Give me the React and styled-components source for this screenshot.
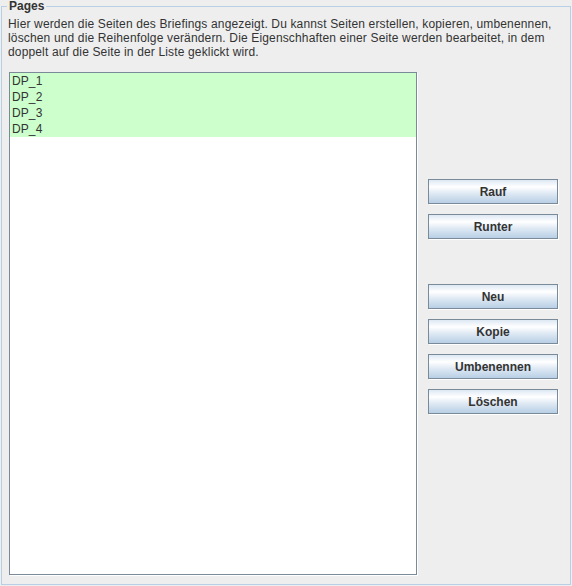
import styled, { createGlobalStyle } from "styled-components";

const GlobalStyle = createGlobalStyle`
  html, body {
    margin: 0;
    padding: 0;
    background: #eeeeee;
  }
  body {
    font-family: "Liberation Sans", Arial, sans-serif;
    font-size: 12px;
    color: #333333;
  }
`;

const Page = styled.div`
  width: 572px;
  height: 586px;
  padding: 0 1px 1px 1px;
  box-sizing: border-box;
  background: #eeeeee;
`;

const Frame = styled.fieldset`
  margin: 0;
  height: 585px;
  box-sizing: border-box;
  border: 1px solid #b8cfe5;
  padding: 5px 12px 9px 6px;
  display: flex;
  flex-direction: column;
  min-width: 0;
`;

const Legend = styled.legend`
  font-weight: bold;
  font-size: 12px;
  line-height: 12px;
  padding: 0 2px;
  margin-left: -1px;
  color: #333333;
`;

const Description = styled.div`
  line-height: 14px;
  letter-spacing: 0.15px;
  white-space: nowrap;
`;

const Line = styled.div``;

const Body = styled.div`
  flex: 1;
  display: flex;
  margin-top: 13px;
  gap: 11px;
  min-height: 0;
`;

const List = styled.div`
  width: 408px;
  margin-left: 1px;
  box-sizing: border-box;
  border: 1px solid #7a8a99;
  background: #ffffff;
  box-shadow: 1px 1px 0 #ffffff;
`;

const Item = styled.div`
  height: 16px;
  line-height: 16px;
  padding-left: 2px;
  letter-spacing: 0.1px;
  background: ${(props) => (props.marked ? "#ccffcc" : "transparent")};
  color: #333333;
`;

const Buttons = styled.div`
  width: 130px;
  display: flex;
  flex-direction: column;
  padding-top: 107px;
`;

const Button = styled.button`
  width: 130px;
  height: 25px;
  margin-top: ${(props) => props.gap}px;
  box-sizing: border-box;
  border: 1px solid #7a8a99;
  box-shadow: 1px 1px 0 #ffffff;
  border-radius: 0;
  padding: 0;
  font-family: "Liberation Sans", Arial, sans-serif;
  font-size: 12px;
  font-weight: bold;
  color: #333333;
  background: linear-gradient(
    to bottom,
    #dde8f3 0%,
    #ffffff 30%,
    #dde8f3 60%,
    #b8cfe5 100%
  );
  cursor: default;
`;

const pages = ["DP_1", "DP_2", "DP_3", "DP_4"];

export default function App() {
  return (
    <Page>
      <GlobalStyle />
      <Frame>
        <Legend>Pages</Legend>
        <Description>
          <Line>
            Hier werden die Seiten des Briefings angezeigt. Du kannst Seiten
            erstellen, kopieren, umbenennen,
          </Line>
          <Line>
            löschen und die Reihenfolge verändern. Die Eigenschhaften einer
            Seite werden bearbeitet, in dem
          </Line>
          <Line>doppelt auf die Seite in der Liste geklickt wird.</Line>
        </Description>
        <Body>
          <List>
            {pages.map((p) => (
              <Item key={p} marked>
                {p}
              </Item>
            ))}
          </List>
          <Buttons>
            <Button gap={0}>Rauf</Button>
            <Button gap={10}>Runter</Button>
            <Button gap={45}>Neu</Button>
            <Button gap={10}>Kopie</Button>
            <Button gap={10}>Umbenennen</Button>
            <Button gap={10}>Löschen</Button>
          </Buttons>
        </Body>
      </Frame>
    </Page>
  );
}
